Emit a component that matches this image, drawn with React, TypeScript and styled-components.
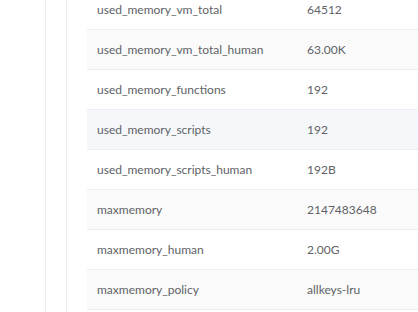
import React from "react";
import styled, { createGlobalStyle } from "styled-components";

const Global = createGlobalStyle`
  html, body { margin: 0; padding: 0; background: #fff; overflow: hidden; }
  body { font-family: Lato, "Open Sans", Arial, sans-serif; }
`;

const Page = styled.div`
  display: flex;
  height: 312px;
  width: 418px;
  overflow: hidden;
`;

const Rail = styled.div`
  flex: 0 0 45px;
  border-right: 1px solid #ebeef5;
`;

const Gutter = styled.div`
  flex: 0 0 20px;
  border-right: 1px solid #ebeef5;
`;

const Content = styled.div`
  flex: 1;
  padding-left: 20px;
  overflow: hidden;
`;

const Table = styled.div`
  width: 600px;
  margin-top: -10px;
  color: #606266;
  font-size: 12px;
`;

const Row = styled.div<{ $bg: string }>`
  display: grid;
  grid-template-columns: 210px 1fr;
  height: 40px;
  align-items: center;
  border-bottom: 1px solid #ebeef5;
  box-sizing: border-box;
  background: ${(p) => p.$bg};
`;

const Cell = styled.div`
  padding-left: 10px;
  white-space: nowrap;
`;

const rows: [string, string, string][] = [
  ["used_memory_vm_total", "64512", "#fff"],
  ["used_memory_vm_total_human", "63.00K", "#fafafa"],
  ["used_memory_functions", "192", "#fff"],
  ["used_memory_scripts", "192", "#f5f7fa"],
  ["used_memory_scripts_human", "192B", "#fff"],
  ["maxmemory", "2147483648", "#fafafa"],
  ["maxmemory_human", "2.00G", "#fff"],
  ["maxmemory_policy", "allkeys-lru", "#fafafa"],
];

export default function App() {
  return (
    <>
      <Global />
      <Page>
        <Rail />
        <Gutter />
        <Content>
          <Table>
            {rows.map(([k, v, bg]) => (
              <Row key={k} $bg={bg}>
                <Cell>{k}</Cell>
                <Cell>{v}</Cell>
              </Row>
            ))}
          </Table>
        </Content>
      </Page>
    </>
  );
}
